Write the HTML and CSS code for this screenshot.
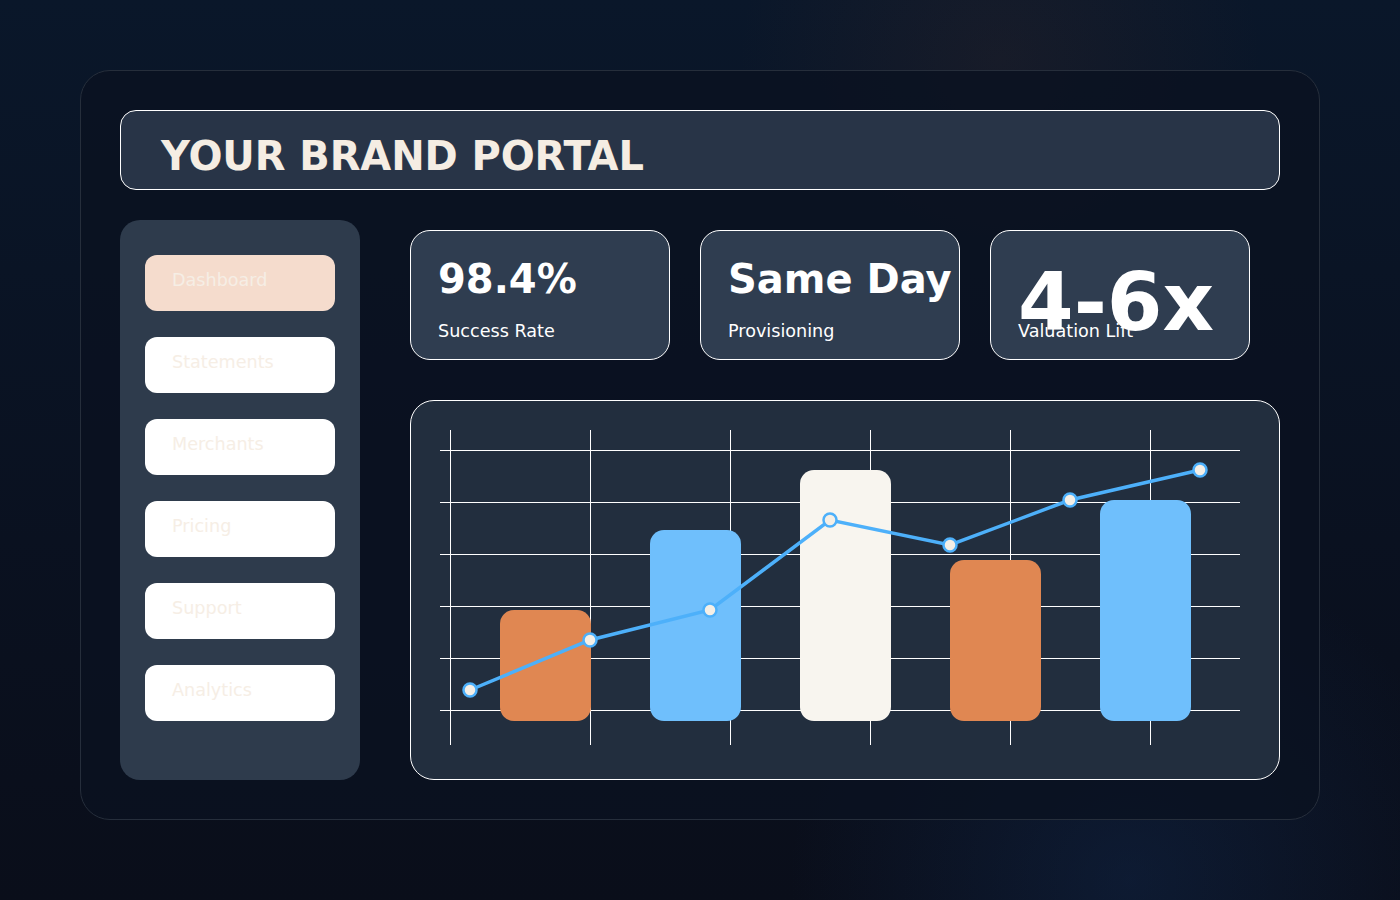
FILE: index.html
```html
<!DOCTYPE html>
<html lang="en">
<head>
  <meta charset="UTF-8">
  <title>Your Brand Portal</title>
  <link rel="stylesheet" href="styles.css">
</head>
<body>
  <div class="frame">
    <!-- Header -->
    <header class="topbar">
      <h1>YOUR BRAND PORTAL</h1>
    </header>

    <div class="layout">
      <!-- Sidebar -->
      <nav class="sidebar">
        <div class="nav-item active">Dashboard</div>
        <div class="nav-item">Statements</div>
        <div class="nav-item">Merchants</div>
        <div class="nav-item">Pricing</div>
        <div class="nav-item">Support</div>
        <div class="nav-item">Analytics</div>
      </nav>

      <main class="main">
        <!-- Stats -->
        <div class="stats">
          <div class="stat">
            <div class="stat-value">98.4%</div>
            <div class="stat-label">Success Rate</div>
          </div>
          <div class="stat">
            <div class="stat-value">Same Day</div>
            <div class="stat-label">Provisioning</div>
          </div>
          <div class="stat">
            <div class="stat-value big">4-6x</div>
            <div class="stat-label">Valuation Lift</div>
          </div>
        </div>

        <!-- Chart -->
        <div class="chart">
          <svg viewBox="1 1 868 378" width="868" height="378">
            <g stroke="#ffffff" stroke-width="1">
              <line x1="40.5" y1="30" x2="40.5" y2="345"/>
              <line x1="180.5" y1="30" x2="180.5" y2="345"/>
              <line x1="320.5" y1="30" x2="320.5" y2="345"/>
              <line x1="460.5" y1="30" x2="460.5" y2="345"/>
              <line x1="600.5" y1="30" x2="600.5" y2="345"/>
              <line x1="740.5" y1="30" x2="740.5" y2="345"/>
              <line x1="30" y1="50.5" x2="830" y2="50.5"/>
              <line x1="30" y1="102.5" x2="830" y2="102.5"/>
              <line x1="30" y1="154.5" x2="830" y2="154.5"/>
              <line x1="30" y1="206.5" x2="830" y2="206.5"/>
              <line x1="30" y1="258.5" x2="830" y2="258.5"/>
              <line x1="30" y1="310.5" x2="830" y2="310.5"/>
            </g>
            <rect x="90" y="210" width="91" height="111" rx="14" fill="#e08752"/>
            <rect x="240" y="130" width="91" height="191" rx="14" fill="#6fbffc"/>
            <rect x="390" y="70" width="91" height="251" rx="14" fill="#f8f5ef"/>
            <rect x="540" y="160" width="91" height="161" rx="14" fill="#e08752"/>
            <rect x="690" y="100" width="91" height="221" rx="14" fill="#6fbffc"/>
            <polyline points="60,290 180,240 300,210 420,120 540,145 660,100 790,70" fill="none" stroke="#4db0fa" stroke-width="3.5"/>
            <g fill="#f5efe6" stroke="#4db0fa" stroke-width="2.5">
              <circle cx="60" cy="290" r="6.5"/>
              <circle cx="180" cy="240" r="6.5"/>
              <circle cx="300" cy="210" r="6.5"/>
              <circle cx="420" cy="120" r="6.5"/>
              <circle cx="540" cy="145" r="6.5"/>
              <circle cx="660" cy="100" r="6.5"/>
              <circle cx="790" cy="70" r="6.5"/>
            </g>
          </svg>
        </div>
      </main>
    </div>
  </div>
</body>
</html>
```

FILE: styles.css
```css
body {
  margin: 0;
  height: 900px;
  padding: 70px 80px 0;
  box-sizing: border-box;
  font-family: "DejaVu Sans", Verdana, sans-serif;
  background:
    radial-gradient(circle at 1000px 60px, rgba(70, 45, 40, 0.22), transparent 260px),
    radial-gradient(circle at 1130px 880px, rgba(20, 50, 95, 0.35), transparent 340px),
    linear-gradient(180deg, #0a172a 0%, #0a1120 60%, #0a0e1a 100%);
}
.frame {
  width: 1240px;
  height: 750px;
  box-sizing: border-box;
  padding: 40px;
  border: 1px solid #262e3b;
  border-radius: 30px;
  background: rgba(10, 18, 32, 0.8);
}
.topbar {
  height: 80px;
  box-sizing: border-box;
  margin: -1px -1px 0;
  padding: 22px 40px 0;
  background: #283447;
  border: 1px solid #ffffff;
  border-radius: 16px;
}
h1 {
  margin: 0;
  font-size: 40px;
  font-weight: bold;
  letter-spacing: -0.1px;
  color: #f5ede3;
}
.layout {
  display: flex;
  gap: 50px;
  margin: 30px -1px 0;
}
.sidebar {
  width: 240px;
  height: 560px;
  box-sizing: border-box;
  padding: 35px 25px;
  background: #2e3b4c;
  border-radius: 20px;
  display: flex;
  flex-direction: column;
  gap: 26px;
}
.nav-item {
  height: 56px;
  box-sizing: border-box;
  padding: 15px 27px 0;
  background: #ffffff;
  border-radius: 12px;
  font-size: 17.6px;
  color: #f6eee5;
}
.nav-item.active {
  background: #f5dccd;
}
.main {
  flex: 1;
  padding-top: 10px;
}
.stats {
  display: flex;
  gap: 30px;
}
.stat {
  width: 260px;
  height: 130px;
  box-sizing: border-box;
  padding: 25px 27px 0;
  background: #2f3d50;
  border: 1px solid #ffffff;
  border-radius: 20px;
  color: #ffffff;
}
.stat-value {
  height: 47px;
  margin-bottom: 18px;
  font-size: 40px;
  font-weight: bold;
  white-space: nowrap;
}
.stat-value.big {
  font-size: 80px;
}
.stat-label {
  font-size: 17.6px;
}
.chart {
  margin-top: 40px;
  width: 870px;
  height: 380px;
  box-sizing: border-box;
  background: #222e3e;
  border: 1px solid #ffffff;
  border-radius: 24px;
  overflow: hidden;
}
.chart svg {
  display: block;
}
```
